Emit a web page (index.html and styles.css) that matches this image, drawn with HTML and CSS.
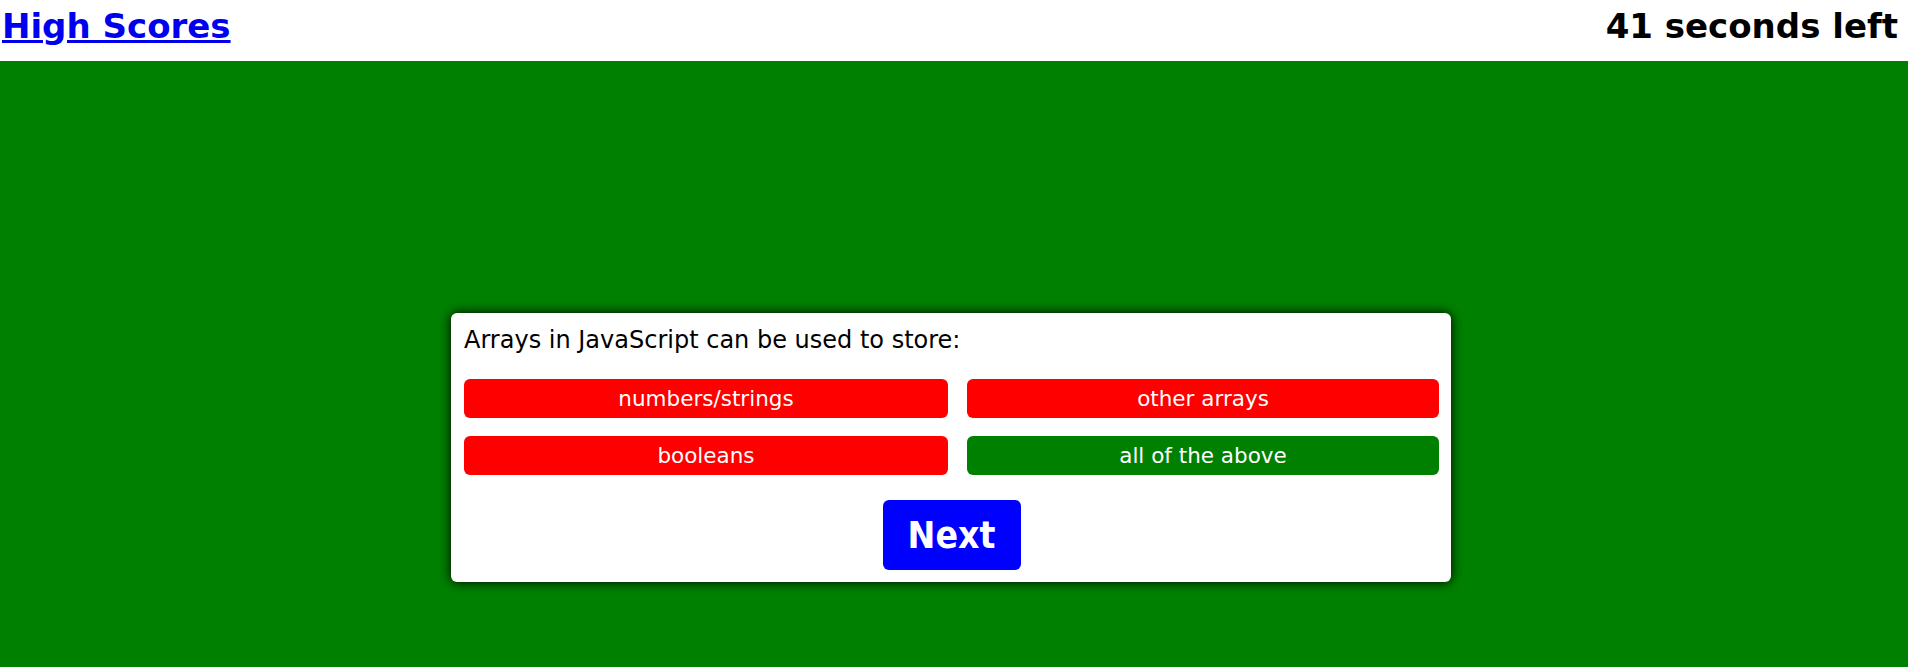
FILE: index.html
```html
<!DOCTYPE html>
<html>
<head>
<meta charset="utf-8">
<title>Quiz</title>
<link rel="stylesheet" href="styles.css">
</head>
<body>
<header class="topbar">
  <a class="scores-link" href="#">High Scores</a>
  <div class="timer">41 seconds left</div>
</header>
<main class="stage">
  <section class="card">
    <p class="question">Arrays in JavaScript can be used to store:</p>
    <div class="options">
      <button class="option wrong">numbers/strings</button>
      <button class="option wrong">other arrays</button>
      <button class="option wrong">booleans</button>
      <button class="option right">all of the above</button>
    </div>
    <div class="actions">
      <button class="next">Next</button>
    </div>
  </section>
</main>
</body>
</html>
```
FILE: styles.css
```css
html, body {
  margin: 0;
  padding: 0;
  height: 100%;
}
body {
  font-family: "DejaVu Sans", sans-serif;
  display: flex;
  flex-direction: column;
  background: #008000;
}
.topbar {
  height: 61px;
  background: #fff;
  display: flex;
  justify-content: space-between;
  align-items: flex-start;
  padding: 0 10px 0 2px;
  flex-shrink: 0;
}
.scores-link {
  color: #0000ee;
  font-size: 34px;
  font-weight: bold;
  line-height: 52px;
  text-decoration: underline;
}
.timer {
  font-size: 34px;
  font-weight: bold;
  line-height: 52px;
  color: #000;
}
.stage {
  flex: 1;
  background: #008000;
  padding-top: 252px;
  padding-right: 6px;
}
.card {
  width: 1000px;
  margin: 0 auto;
  background: #fff;
  border-radius: 6px;
  box-shadow: 0 0 12px #000;
  padding: 10px 12px 12px 13px;
  box-sizing: border-box;
}
.question {
  margin: 0;
  font-size: 24px;
  line-height: 34px;
  color: #000;
}
.options {
  margin-top: 22px;
  display: grid;
  grid-template-columns: 484fr 472fr;
  column-gap: 19px;
  row-gap: 18px;
}
.option {
  height: 39px;
  border: none;
  border-radius: 6px;
  color: #fff;
  font-family: "DejaVu Sans", sans-serif;
  font-size: 21.5px;
  padding: 0;
}
.wrong { background: #ff0000; }
.right { background: #008000; }
.actions {
  margin-top: 25px;
  display: flex;
  justify-content: center;
}
.next {
  width: 138px;
  height: 70px;
  border: none;
  border-radius: 6px;
  background: #0000ff;
  color: #fff;
  font-family: "DejaVu Sans Condensed", "DejaVu Sans", sans-serif;
  font-weight: bold;
  font-size: 37px;
  padding: 0;
}
```
